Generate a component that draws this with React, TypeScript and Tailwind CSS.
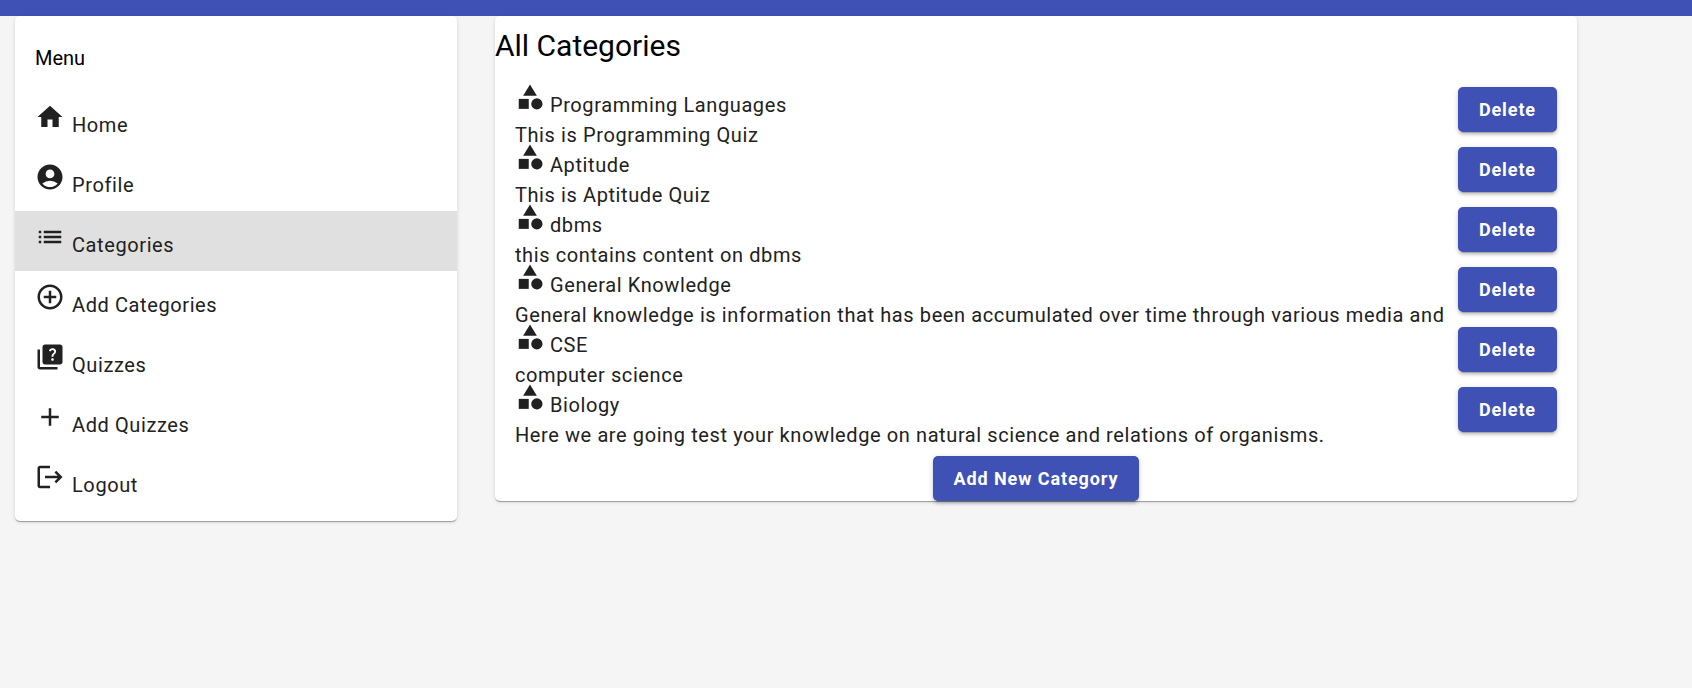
import type { ReactNode } from "react";
import type { IconType } from "react-icons";
import {
  MdAccountCircle,
  MdAdd,
  MdAddCircleOutline,
  MdCategory,
  MdHome,
  MdList,
  MdLogout,
  MdQuiz,
} from "react-icons/md";

type MenuItem = { label: string; href: string; icon: IconType; active?: boolean };

const menuItems: MenuItem[] = [
  { label: "Home", href: "#home", icon: MdHome },
  { label: "Profile", href: "#profile", icon: MdAccountCircle },
  { label: "Categories", href: "#categories", icon: MdList, active: true },
  { label: "Add Categories", href: "#add-category", icon: MdAddCircleOutline },
  { label: "Quizzes", href: "#quizzes", icon: MdQuiz },
  { label: "Add Quizzes", href: "#add-quiz", icon: MdAdd },
  { label: "Logout", href: "#logout", icon: MdLogout },
];

const categories = [
  { title: "Programming Languages", description: "This is Programming Quiz" },
  { title: "Aptitude", description: "This is Aptitude Quiz" },
  { title: "dbms", description: "this contains content on dbms" },
  {
    title: "General Knowledge",
    description:
      "General knowledge is information that has been accumulated over time through various media and",
  },
  { title: "CSE", description: "computer science" },
  {
    title: "Biology",
    description:
      "Here we are going test your knowledge on natural science and relations of organisms.",
  },
];

const cardClass =
  "rounded-[5px] bg-white shadow-[0_2px_1px_-1px_rgba(0,0,0,0.2),0_1px_1px_0_rgba(0,0,0,0.14),0_1px_4px_0_rgba(0,0,0,0.12)]";

function RaisedButton({ children }: { children: ReactNode }) {
  return (
    <button
      type="button"
      className="h-[45px] shrink-0 cursor-pointer rounded-[5px] bg-[#3f51b5] px-[21px] text-[18px] font-bold tracking-wider whitespace-nowrap text-white shadow-[0_4px_1px_-3px_rgba(0,0,0,0.2),0_3px_3px_0_rgba(0,0,0,0.14),0_1px_6px_0_rgba(0,0,0,0.12)]"
    >
      {children}
    </button>
  );
}

function Sidebar() {
  return (
    <nav className={`${cardClass} pt-[30px] pb-2.5`} aria-labelledby="menu-title">
      <h2 id="menu-title" className="mb-[21px] px-5 text-[20px] leading-6 text-black">
        Menu
      </h2>
      <ul>
        {menuItems.map(({ label, href, icon: Icon, active }) => (
          <li key={label}>
            <a
              href={href}
              aria-current={active ? "page" : undefined}
              className={`flex h-[60px] items-baseline gap-[7px] px-5 pt-[11px] text-[20px] leading-6 tracking-[0.03em] ${
                active ? "bg-[#e0e0e0]" : ""
              }`}
            >
              <Icon className="size-[30px] shrink-0" aria-hidden="true" />
              <span>{label}</span>
            </a>
          </li>
        ))}
      </ul>
    </nav>
  );
}

function CategoryList() {
  return (
    <main className={`${cardClass} min-w-0 pt-2.5`}>
      <h1 className="text-[30px] leading-10 text-black">All Categories</h1>
      <ul className="mt-4 mb-3.5 px-5">
        {categories.map(({ title, description }) => (
          <li key={title} className="flex h-[60px] items-start justify-between gap-2">
            <div className="min-w-0 text-[20px] leading-6 tracking-[0.03em]">
              <h2 className="flex items-baseline gap-[5px]">
                <MdCategory className="size-[30px] shrink-0" aria-hidden="true" />
                <span>{title}</span>
              </h2>
              <p className="mt-1.5 overflow-hidden whitespace-nowrap">{description}</p>
            </div>
            <div className="shrink-0 pt-[5px]">
              <RaisedButton>Delete</RaisedButton>
            </div>
          </li>
        ))}
      </ul>
      <div className="flex justify-center">
        <RaisedButton>Add New Category</RaisedButton>
      </div>
    </main>
  );
}

export default function App() {
  return (
    <div className="min-h-screen bg-[#f5f5f5] font-[Roboto,sans-serif] text-[#212121]">
      <header className="h-4 bg-[#3f51b5]" />
      <div className="grid grid-cols-[29fr_71fr] items-start gap-[38px] pr-[115px] pl-[15px]">
        <Sidebar />
        <CategoryList />
      </div>
    </div>
  );
}
